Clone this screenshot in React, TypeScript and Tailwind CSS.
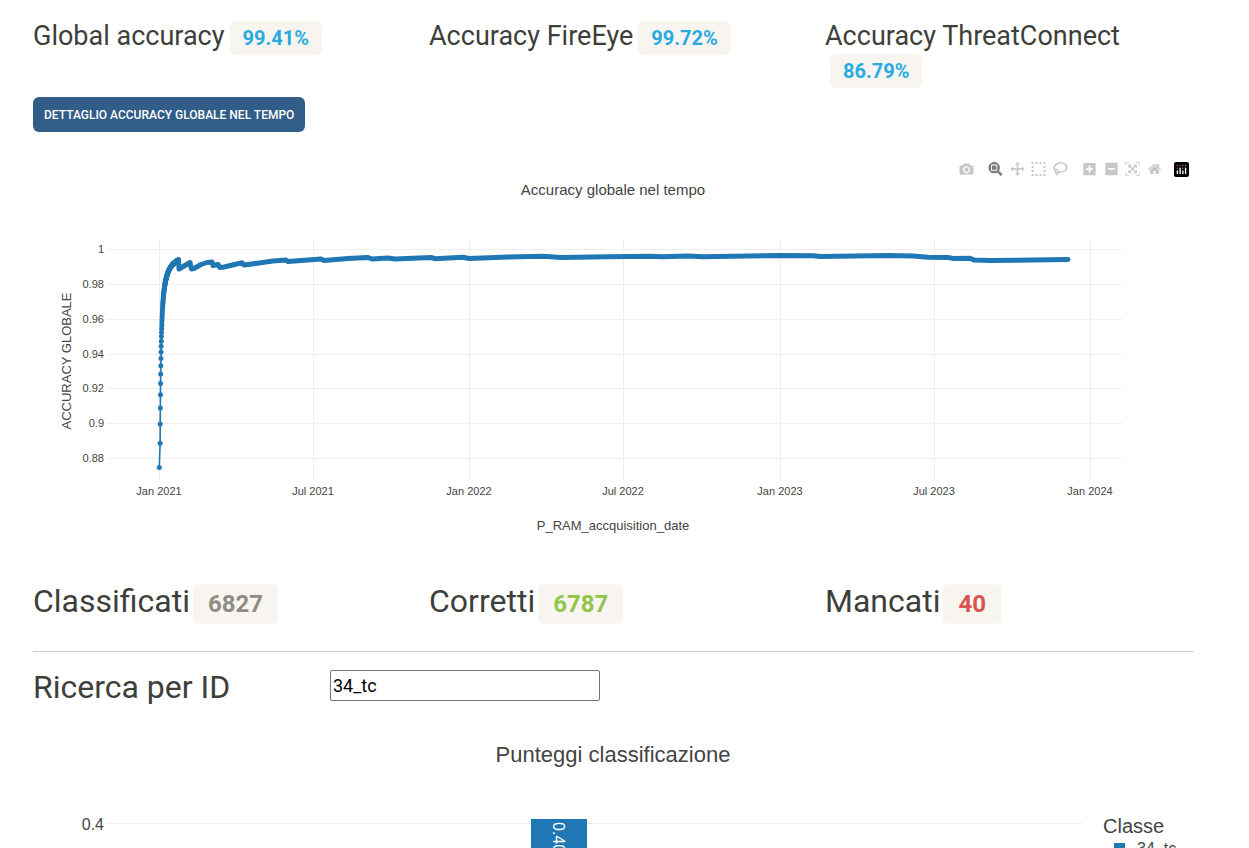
import React, { useState } from "react";

const PLOT_BLUE = "#1f77b4";

type ModeIcon = { label: string; width: number; d: string; active?: boolean };

const CAMERA: ModeIcon[] = [
  {
    label: "Download plot as a png",
    width: 1000,
    d: "m500 450c-83 0-150-67-150-150 0-83 67-150 150-150 83 0 150 67 150 150 0 83-67 150-150 150z m400 150h-120c-16 0-34 13-39 29l-31 93c-6 15-23 28-40 28h-340c-16 0-34-13-39-28l-31-94c-6-15-23-28-40-28h-120c-55 0-100-45-100-100v-450c0-55 45-100 100-100h800c55 0 100 45 100 100v450c0 55-45 100-100 100z m-400-550c-138 0-250 112-250 250 0 138 112 250 250 250 138 0 250-112 250-250 0-138-112-250-250-250z m365 380c-19 0-35 16-35 35 0 19 16 35 35 35 19 0 35-16 35-35 0-19-16-35-35-35z",
  },
];

const DRAG_MODES: ModeIcon[] = [
  {
    label: "Zoom",
    width: 1000,
    active: true,
    d: "m1000-25l-250 251c40 63 63 138 63 218 0 224-182 406-407 406-224 0-406-182-406-406s183-406 407-406c80 0 155 22 218 62l250-250 125 125z m-812 250l0 438 437 0 0-438-437 0z m62 375l313 0 0-312-313 0 0 312z",
  },
  {
    label: "Pan",
    width: 1000,
    d: "m1000 350l-187 188 0-125-250 0 0 250 125 0-188 187-187-187 125 0 0-250-250 0 0 125-188-188 186-187 0 125 252 0 0-250-125 0 187-188 188 188-125 0 0 250 250 0 0-126 187 188z",
  },
  {
    label: "Box Select",
    width: 1000,
    d: "m0 850l0-143 143 0 0 143-143 0z m286 0l0-143 143 0 0 143-143 0z m285 0l0-143 143 0 0 143-143 0z m286 0l0-143 143 0 0 143-143 0z m-857-286l0-143 143 0 0 143-143 0z m857 0l0-143 143 0 0 143-143 0z m-857-285l0-143 143 0 0 143-143 0z m857 0l0-143 143 0 0 143-143 0z m-857-286l0-143 143 0 0 143-143 0z m286 0l0-143 143 0 0 143-143 0z m285 0l0-143 143 0 0 143-143 0z m286 0l0-143 143 0 0 143-143 0z",
  },
  {
    label: "Lasso Select",
    width: 1031,
    d: "m1018 538c-36 207-290 336-568 286-277-48-473-256-436-463 10-57 36-108 76-151-13-66 11-137 68-183 34-28 75-41 114-42l-55-70 0 0c-2-1-3-2-4-3-10-14-8-34 5-45 14-11 34-8 45 4 1 1 2 3 2 5l0 0 113 140c16 11 31 24 45 40 4 3 6 7 8 11 48-3 100 0 151 9 278 48 473 255 436 462z m-624-379c-80 14-149 48-197 96 42 42 109 47 156 9 33-26 47-66 41-105z m-187-74c-19 16-33 37-39 60 50-32 109-55 174-68-42-25-95-24-135 8z m360 75c-34-7-69-9-102-8 8 62-16 128-68 170-73 59-175 54-244-5-9 20-16 40-20 61-28 159 121 317 333 354s407-60 434-217c28-159-121-318-333-355z",
  },
];

const ZOOM_ACTIONS: ModeIcon[] = [
  {
    label: "Zoom in",
    width: 875,
    d: "m1 787l0-875 875 0 0 875-875 0z m687-500l-187 0 0-187-125 0 0 187-188 0 0 125 188 0 0 187 125 0 0-187 187 0 0-125z",
  },
  {
    label: "Zoom out",
    width: 875,
    d: "m0 788l0-876 875 0 0 876-875 0z m688-500l-500 0 0 125 500 0 0-125z",
  },
  {
    label: "Autoscale",
    width: 1000,
    d: "m250 850l-187 0-63 0 0-62 0-188 63 0 0 188 187 0 0 62z m688 0l-188 0 0-62 188 0 0-188 62 0 0 188 0 62-62 0z m-875-938l0 188-63 0 0-188 0-62 63 0 187 0 0 62-187 0z m875 188l0-188-188 0 0-62 188 0 62 0 0 62 0 188-62 0z m-125 188l-1 0-93-94-156 156 156 156 92-93 2 0 0 250-250 0 0-2 93-92-156-156-156 156 94 92 0 2-250 0 0-250 0 0 93 93 157-156-157-156-93 94 0 0 0-250 250 0 0 0-94 93 156 157 156-157-93-93 0 0 250 0 0 250z",
  },
  {
    label: "Reset axes",
    width: 928,
    d: "m786 296v-267q0-15-11-26t-25-10h-214v214h-143v-214h-214q-15 0-25 10t-11 26v267q0 1 0 2t0 2l321 264 321-264q1-1 1-4z m124 39l-34-41q-5-5-12-6h-2q-7 0-12 3l-386 322-386-322q-7-4-13-4-7 2-12 7l-35 41q-4 5-3 13t6 12l401 334q18 15 42 15t43-15l136-114v109q0 8 5 13t13 5h107q8 0 13-5t5-13v-227l122-102q5-5 6-12t-4-13z",
  },
];

function ModeGroup({ icons, className }: { icons: ModeIcon[]; className: string }) {
  return (
    <div className={`flex items-center justify-around ${className}`}>
      {icons.map((icon) => (
        <button key={icon.label} type="button" aria-label={icon.label} className="flex cursor-pointer">
          <svg viewBox={`0 0 ${icon.width} 1000`} className="h-[14px] w-[15px]">
            <path
              d={icon.d}
              transform="matrix(1 0 0 -1 0 850)"
              fill={icon.active ? "rgba(68,68,68,0.7)" : "rgba(68,68,68,0.3)"}
            />
          </svg>
        </button>
      ))}
    </div>
  );
}

function PlotlyLogo() {
  return (
    <svg viewBox="0 0 132 132" className="size-[15px]">
      <rect width="132" height="132" rx="18" fill="#000" />
      <circle cx="102" cy="30" r="6" fill="#5bd" />
      <circle cx="78" cy="30" r="6" fill="#5bd" />
      <circle cx="78" cy="54" r="6" fill="#f7c" />
      <circle cx="54" cy="30" r="6" fill="#e0457b" />
      <circle cx="30" cy="30" r="6" fill="#e0457b" />
      <circle cx="30" cy="54" r="6" fill="#e0457b" />
      <path
        fill="#fff"
        d="M30 72a6 6 0 0 0-6 6v24a6 6 0 0 0 12 0V78a6 6 0 0 0-6-6zM78 72a6 6 0 0 0-6 6v24a6 6 0 0 0 12 0V78a6 6 0 0 0-6-6zM54 48a6 6 0 0 0-6 6v48a6 6 0 0 0 12 0V54a6 6 0 0 0-6-6zM102 48a6 6 0 0 0-6 6v48a6 6 0 0 0 12 0V54a6 6 0 0 0-6-6z"
      />
    </svg>
  );
}

function ModeBar() {
  return (
    <div className="absolute top-[22px] right-[5px] flex h-[14px] gap-2">
      <ModeGroup icons={CAMERA} className="w-[22px]" />
      <ModeGroup icons={DRAG_MODES} className="w-[86px]" />
      <ModeGroup icons={ZOOM_ACTIONS} className="w-[86px]" />
      <a href="#plotly" aria-label="Produced with Plotly" className="flex w-4 items-center justify-center">
        <PlotlyLogo />
      </a>
    </div>
  );
}

/* Chart coordinates: the plot starts at 1 = y 109 and loses 1746px per unit of accuracy. */
const yOf = (v: number) => 109.3 + (1 - v) * 1746;

const DATES: [string, number][] = [
  ["Jan 2021", 126],
  ["Jul 2021", 280],
  ["Jan 2022", 436],
  ["Jul 2022", 590],
  ["Jan 2023", 747],
  ["Jul 2023", 901],
  ["Jan 2024", 1057],
];
const LEVELS: [string, number][] = [
  ["1", 109],
  ["0.98", 144],
  ["0.96", 179],
  ["0.94", 214],
  ["0.92", 248],
  ["0.9", 283],
  ["0.88", 318],
];

const RISE: [number, number][] = Array.from({ length: 158 }, (_, i) => {
  const n = i + 8;
  return [(i === 0 ? 126.3 : 127) + (i * 18.5) / 157, yOf(1 - 1 / n)];
});

const PLATEAU: [number, number][] = [
  [145.5, 121], [146, 129], [157, 122.5], [158.5, 129], [161, 128.5], [168, 124.5], [174, 122.5], [179, 122],
  [180, 125.5], [185, 124.5], [187, 127.5], [191, 127], [209, 122.8], [211, 125], [215, 124.5], [240, 121],
  [253, 120], [255, 121.5], [288, 119], [291, 120.5], [315, 118.5], [335, 117.5], [339, 119], [355, 118],
  [362, 119], [398, 117.5], [402, 118.7], [430, 117.3], [436, 118.5], [475, 117], [510, 116.3], [528, 117.5],
  [575, 116.7], [618, 116.2], [628, 116.8], [655, 116], [670, 116.7], [747, 115.5], [780, 115.8], [788, 116.5],
  [855, 115.5], [880, 116], [895, 117.3], [915, 117.5], [920, 118.4], [937, 118.2], [941, 120], [957, 120.5],
  [1035, 119.5],
];

const toPath = (pts: [number, number][]) => pts.map((p) => p.join(",")).join(" ");

function AccuracyChart() {
  return (
    <div className="relative mt-2 mr-[3px]">
      <svg viewBox="0 0 1161 400" className="block h-auto w-full font-['Liberation_Sans',Arial,sans-serif]" role="img">
        <g stroke="#eee" strokeWidth="1" shapeRendering="crispEdges">
          {DATES.map(([label, x]) => (
            <path key={label} d={`M${x + 0.5} 100V340`} />
          ))}
          {LEVELS.map(([label, y]) => (
            <path key={label} d={`M74 ${y + 0.5}H1089`} />
          ))}
        </g>
        <polyline points={toPath(RISE)} fill="none" stroke={PLOT_BLUE} strokeWidth="1.6" />
        {RISE.map(([x, y]) => (
          <circle key={x} cx={x} cy={y} r="2.5" fill={PLOT_BLUE} />
        ))}
        <polyline
          points={toPath([...RISE.slice(-30), ...PLATEAU])}
          fill="none"
          stroke={PLOT_BLUE}
          strokeWidth="5"
          strokeLinecap="round"
          strokeLinejoin="round"
        />
        <g fill="#444" fontSize="11">
          {LEVELS.map(([label, y]) => (
            <text key={label} x="71" y={y + 4} textAnchor="end">
              {label}
            </text>
          ))}
          {DATES.map(([label, x]) => (
            <text key={label} x={x} y="355" textAnchor="middle">
              {label}
            </text>
          ))}
        </g>
        <g fill="#444" textAnchor="middle">
          <text x="580" y="55" fontSize="15">
            Accuracy globale nel tempo
          </text>
          <text x="580" y="390" fontSize="13">
            P_RAM_accquisition_date
          </text>
          <text transform="translate(38 221) rotate(-90)" fontSize="13">
            ACCURACY GLOBALE
          </text>
        </g>
      </svg>
      <ModeBar />
    </div>
  );
}

function ScoreChart() {
  return (
    <div className="mr-[3px]">
      <svg viewBox="0 0 1161 450" className="block h-auto w-full font-['Liberation_Sans',Arial,sans-serif]" role="img">
        <path d="M74 118.5H1049" stroke="#eee" strokeWidth="1" shapeRendering="crispEdges" />
        <rect x="498" y="114" width="56" height="300" fill={PLOT_BLUE} />
        <text transform="translate(520 117) rotate(90)" fontSize="16" fill="#fff">
          0.40
        </text>
        <text x="580" y="57" fontSize="22" fill="#444" textAnchor="middle">
          Punteggi classificazione
        </text>
        <text x="71" y="125" fontSize="16" fill="#444" textAnchor="end">
          0.4
        </text>
        <text x="1070" y="128" fontSize="20" fill="#444">
          Classe
        </text>
        <rect x="1081" y="138" width="11" height="11" fill={PLOT_BLUE} />
        <text x="1104" y="149" fontSize="16" fill="#444">
          34_tc
        </text>
      </svg>
    </div>
  );
}

function Accuracy({ label, value }: { label: string; value: string }) {
  return (
    <h3 className="text-[27px] leading-[33px]">
      {label}
      <span className="ml-[5px] inline-block rounded-md bg-[#f8f5f0] px-[13px] py-[7px] align-baseline text-xl leading-5 font-bold text-[#29abe0]">
        {value}
      </span>
    </h3>
  );
}

function Count({ label, value, tone }: { label: string; value: string; tone: string }) {
  return (
    <h2 className="text-[32px] leading-[38px]">
      {label}
      <span
        className={`ml-[3px] inline-block rounded-md bg-[#f8f5f0] px-[15px] py-2 align-baseline text-2xl leading-6 font-bold ${tone}`}
      >
        {value}
      </span>
    </h2>
  );
}

export default function App() {
  const [id, setId] = useState("34_tc");
  return (
    <main className="h-screen overflow-y-auto bg-white pt-5 pr-[52px] pl-[33px] font-[Roboto,sans-serif] text-[#3e3f3a] [scrollbar-width:none]">
      <section className="grid grid-cols-3 gap-x-6">
        <Accuracy label="Global accuracy" value="99.41%" />
        <Accuracy label="Accuracy FireEye" value="99.72%" />
        <Accuracy label="Accuracy ThreatConnect" value="86.79%" />
      </section>
      <button
        type="button"
        className="mt-[9px] block h-[35px] cursor-pointer rounded-md bg-[#325d88] px-[11px] text-xs font-medium text-white uppercase"
      >
        Dettaglio accuracy globale nel tempo
      </button>
      <AccuracyChart />
      <section className="mt-[42px] grid grid-cols-3 gap-x-6">
        <Count label="Classificati" value="6827" tone="text-[#8e8c84]" />
        <Count label="Corretti" value="6787" tone="text-[#93c54b]" />
        <Count label="Mancati" value="40" tone="text-[#d9534f]" />
      </section>
      <hr className="mt-[27px] mr-[3px] border-[#cbcbca]" />
      <section className="mt-[18px] grid grid-cols-4 items-start gap-x-6">
        <label htmlFor="search-id" className="text-[32px] leading-[35px]">
          Ricerca per ID
        </label>
        <input
          id="search-id"
          value={id}
          onChange={(e) => setId(e.target.value)}
          className="h-[31px] w-[270px] rounded-xs border border-[#767676] px-[2px] text-lg text-black outline-none"
        />
      </section>
      <ScoreChart />
    </main>
  );
}
